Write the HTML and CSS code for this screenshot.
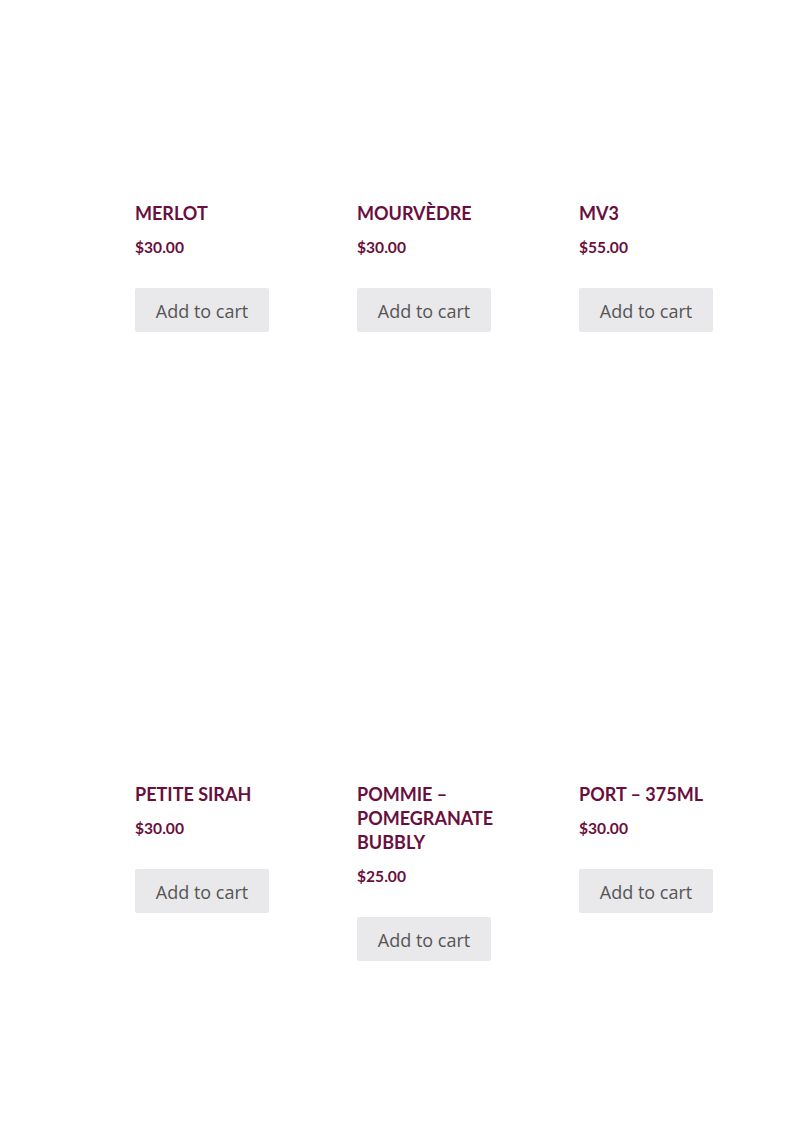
FILE: index.html
```html
<!DOCTYPE html>
<html lang="en">
<head>
<meta charset="utf-8">
<title>Wines</title>
<link rel="stylesheet" href="styles.css">
</head>
<body>
<ul class="products">
  <li class="product">
    <div class="thumb"></div>
    <h2 class="title">MERLOT</h2>
    <span class="price">$30.00</span>
    <a class="button" href="#">Add to cart</a>
  </li>
  <li class="product">
    <div class="thumb"></div>
    <h2 class="title">MOURVÈDRE</h2>
    <span class="price">$30.00</span>
    <a class="button" href="#">Add to cart</a>
  </li>
  <li class="product">
    <div class="thumb"></div>
    <h2 class="title">MV3</h2>
    <span class="price">$55.00</span>
    <a class="button" href="#">Add to cart</a>
  </li>
  <li class="product">
    <div class="thumb"></div>
    <h2 class="title">PETITE SIRAH</h2>
    <span class="price">$30.00</span>
    <a class="button" href="#">Add to cart</a>
  </li>
  <li class="product">
    <div class="thumb"></div>
    <h2 class="title">POMMIE – POMEGRANATE BUBBLY</h2>
    <span class="price">$25.00</span>
    <a class="button" href="#">Add to cart</a>
  </li>
  <li class="product">
    <div class="thumb"></div>
    <h2 class="title">PORT – 375ML</h2>
    <span class="price">$30.00</span>
    <a class="button" href="#">Add to cart</a>
  </li>
</ul>
</body>
</html>
```
FILE: styles.css
```css
html, body {
  margin: 0;
  padding: 0;
  background: #ffffff;
}

.products {
  list-style: none;
  margin: 0;
  padding: 0 0 0 135px;
  display: grid;
  grid-template-columns: repeat(3, 178px);
  column-gap: 44px;
  row-gap: 249px;
  align-items: start;
}

.product {
  display: flex;
  flex-direction: column;
  align-items: flex-start;
}

.thumb {
  height: 178px;
  width: 100%;
  margin-bottom: 23px;
}

.title {
  margin: 0;
  font-family: "Lato", "Open Sans", sans-serif;
  font-weight: 700;
  font-size: 18px;
  line-height: 24px;
  letter-spacing: 0;
  color: #6a0f3d;
}

.price {
  margin-top: 10px;
  font-family: "Lato", "Open Sans", sans-serif;
  font-weight: 700;
  font-size: 15.6px;
  line-height: 24px;
  color: #6a0f3d;
}

.button {
  margin-top: 29px;
  display: flex;
  align-items: center;
  justify-content: center;
  width: 134px;
  height: 44px;
  padding-top: 2px;
  box-sizing: border-box;
  background: #e9e8ea;
  border-radius: 2px;
  font-family: "Open Sans", sans-serif;
  font-size: 18px;
  color: #555555;
  text-decoration: none;
}
```
